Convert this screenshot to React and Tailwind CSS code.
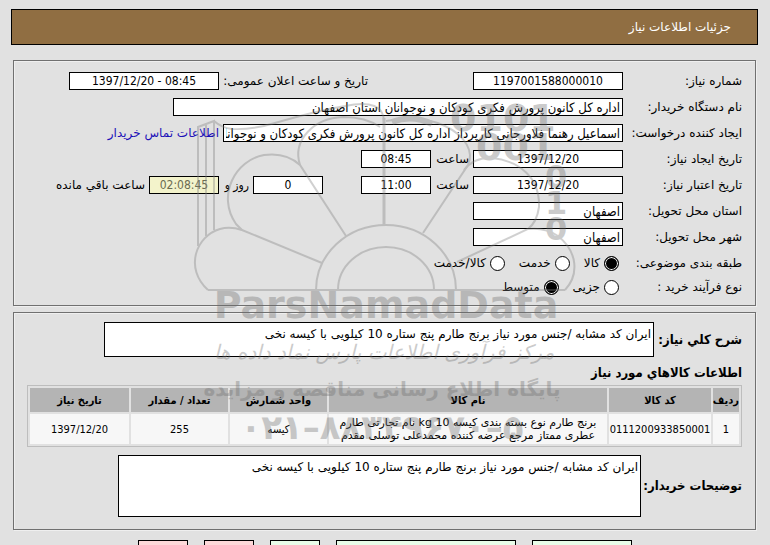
import React from 'react'

const GOODS_COLUMNS = [
  { key: 'row', title: 'ردیف', width: 'w-[26px]' },
  { key: 'code', title: 'کد کالا', width: 'w-[102px]' },
  { key: 'name', title: 'نام کالا', width: 'w-auto' },
  { key: 'unit', title: 'واحد شمارش', width: 'w-[97px]' },
  { key: 'count', title: 'تعداد / مقدار', width: 'w-[97px]' },
  { key: 'date', title: 'تاریخ نیاز', width: 'w-[99px]' },
]

const GOODS = [
  {
    row: '1',
    code: '0111200933850001',
    name: 'برنج طارم نوع بسته بندی کیسه 10 kg نام تجارتی طارم عطری ممتاز مرجع عرضه کننده محمدعلی توسلی مقدم',
    unit: 'کیسه',
    count: '255',
    date: '1397/12/20',
  },
]

const DESCRIPTION = 'ایران کد مشابه /جنس مورد نیاز برنج طارم پنج ستاره 10 کیلویی با کیسه نخی'

const ACTIONS = [
  { id: 'a1', style: 'w-[100px] bg-[#e9fde9]' },
  { id: 'a2', style: 'w-[180px] bg-[#e9fde9]' },
  { id: 'a3', style: 'w-[50px] bg-[#e9fde9]' },
  { id: 'a4', style: 'w-[50px] bg-[#fdd9d9]' },
  { id: 'a5', style: 'w-[50px] bg-[#fdd9d9]' },
]

function Panel({ className, children }) {
  return (
    <section
      className={`border border-[#707070] px-[13px] shadow-[inset_1px_1px_0_#efefef,1px_1px_0_#efefef] ${className}`}
    >
      {children}
    </section>
  )
}

// Short numeric value: number, date or time
function NumberField({ id, className, ...rest }) {
  return (
    <input
      id={id}
      type="text"
      dir="ltr"
      readOnly
      className={`h-[18px] min-w-0 border border-black px-0.5 text-center text-[12px] outline-none ${className}`}
      {...rest}
    />
  )
}

function TextField({ id, className, ...rest }) {
  return (
    <input
      id={id}
      type="text"
      readOnly
      className={`h-[18px] min-w-0 border border-black bg-white px-0.5 text-[13px] text-black outline-none ${className}`}
      {...rest}
    />
  )
}

function Row({ label, htmlFor, children }) {
  return (
    <div className="flex h-[26px] items-center whitespace-nowrap">
      <label htmlFor={htmlFor} className="w-[119px] shrink-0 font-['DejaVu_Sans',sans-serif]">{label}</label>
      {children}
    </div>
  )
}

function RadioRow({ label, name, options, selected, className }) {
  return (
    <div
      role="radiogroup"
      aria-label={label}
      className={`flex items-center whitespace-nowrap font-['DejaVu_Sans',sans-serif] ${className}`}
    >
      <span className="w-[119px] shrink-0">{label}</span>
      {options.map(option => (
        <label key={option} className="me-[10px] ms-1 flex items-center gap-1">
          <input
            type="radio"
            name={name}
            defaultChecked={option === selected}
            className="m-0 h-[15px] w-[15px] shrink-0 appearance-none rounded-full border border-black bg-white checked:bg-black checked:shadow-[inset_0_0_0_1px_white]"
          />
          {option}
        </label>
      ))}
    </div>
  )
}

function Watermark() {
  return (
    <svg
      aria-hidden="true"
      viewBox="190 95 390 360"
      className="pointer-events-none absolute top-[95px] left-[190px] h-[360px] w-[390px] opacity-35"
      fill="none"
      stroke="#7c7c7c"
      strokeWidth="2"
    >
      {/* tower */}
      <path d="M198 246V127L214 121V230M206 236V124M214 121Q222 128 232 129Q252 130 275 123Q320 110 345 106Q384 98 384 122" />
      <path d="M384 118V225" strokeWidth="3" />
      {/* petals */}
      <path d="M322 263L242 230Q230 226 220 229C196 236 184 268 208 290" />
      <path d="M346 236L300 165Q286 152 264 155C236 160 216 195 236 224L242 230" />
      <path d="M300 165C292 140 314 118 343 117Q366 117 380 127" />
      <path d="M386 121Q420 114 445 126C466 136 474 152 468 165L423 233" />
      <path d="M464 170Q474 157 492 158C520 161 540 178 539 207Q537 222 528 229L457 262" />
      <path d="M528 229Q545 227 558 236C578 252 579 275 565 290" />
      <path d="M392 122Q412 114 432 124" strokeWidth="6" />
      {/* hub */}
      <path d="M208 290H565" />
      <path d="M316 290A70 65 0 0 1 456 290M338 290A48 43 0 0 1 434 290" />

      <g fill="#6c6c6c" stroke="none">
        <g fontFamily="DejaVu Sans, sans-serif" fontWeight="700" direction="ltr">
          <text x="450" y="131" fontSize="38">0101</text>
          <text x="476" y="160" fontSize="38">001</text>
          <text x="545" y="188" fontSize="32">0</text>
          <text x="545" y="214" fontSize="32">1</text>
          <text x="545" y="240" fontSize="32">0</text>
        </g>
        <text x="386" y="318" textAnchor="middle" direction="ltr" fontFamily="DejaVu Sans, sans-serif" fontWeight="700" fontSize="38">
          ParsNamadData
        </text>
        <g direction="rtl" textAnchor="middle">
          <text x="384" y="359" fontFamily="DejaVu Sans, sans-serif" fontStyle="italic" fontSize="20">
            مرکز فرآوری اطلاعات پارس نماد داده ها
          </text>
          <text x="382" y="396" fontFamily="DejaVu Sans, sans-serif" fontWeight="700" fontSize="20">
            پایگاه اطلاع رسانی مناقصه و مزایده
          </text>
        </g>
        <text x="382" y="439" textAnchor="middle" direction="ltr" fontFamily="DejaVu Sans, sans-serif" fontWeight="700" fontSize="34">
          ۰۲۱–۸۸۳۴۹۶۷۰–۵
        </text>
      </g>
    </svg>
  )
}

export default function App() {
  return (
    <div
      dir="rtl"
      lang="fa"
      className="relative h-screen overflow-hidden bg-[#e1e1e1] ps-3 pe-[11px] pt-[9px] font-['DejaVu_Sans_Condensed','DejaVu_Sans',sans-serif] text-[12px] leading-4 text-black"
    >
      <header className="flex h-9 items-center border border-black bg-[#906e42] px-[26px] font-['DejaVu_Sans',sans-serif] text-white">
        <h1>جزئیات اطلاعات نیاز</h1>
      </header>

      <main className="mx-0.5 mt-[15px]">
        <Panel className="pt-[7px] pb-[7px]">
          <Row label="شماره نیاز:" htmlFor="number">
            <NumberField id="number" className="w-[150px] bg-white" defaultValue="1197001588000010" />
            <label htmlFor="announced" className="ms-[105px] w-[149px] font-['DejaVu_Sans',sans-serif]">
              تاریخ و ساعت اعلان عمومی:
            </label>
            <NumberField id="announced" className="w-[150px] bg-white" defaultValue="1397/12/20 - 08:45" />
          </Row>
          <Row label="نام دستگاه خریدار:" htmlFor="buyer">
            <TextField id="buyer" className="w-[450px]" defaultValue="اداره کل کانون پرورش فکری کودکان و نوجوانان استان اصفهان" />
          </Row>
          <Row label="ایجاد کننده درخواست:" htmlFor="creator">
            <TextField id="creator" className="w-[400px]" defaultValue="اسماعیل رهنما فلاورجانی کارپرداز اداره کل کانون پرورش فکری کودکان و نوجوانان استان اصفهان" />
            <a href="#contact" className="ms-1 font-['DejaVu_Sans',sans-serif] text-[#1c10b8]">اطلاعات تماس خریدار</a>
          </Row>
          <Row label="تاریخ ایجاد نیاز:" htmlFor="created">
            <NumberField id="created" className="w-[150px] bg-white" defaultValue="1397/12/20" />
            <label htmlFor="createdTime" className="w-[42px] px-1 font-['DejaVu_Sans',sans-serif]">ساعت</label>
            <NumberField id="createdTime" className="w-[70px] bg-white" defaultValue="08:45" />
          </Row>
          <Row label="تاریخ اعتبار نیاز:" htmlFor="valid">
            <NumberField id="valid" className="w-[150px] bg-white" defaultValue="1397/12/20" />
            <label htmlFor="validTime" className="w-[42px] px-1 font-['DejaVu_Sans',sans-serif]">ساعت</label>
            <NumberField id="validTime" className="w-[70px] bg-white" defaultValue="11:00" />
            <NumberField id="days" className="mr-[38px] w-[70px] bg-white" defaultValue="0" />
            <label htmlFor="days" className="w-[34px] px-1">روز و</label>
            <NumberField id="remaining" className="w-[70px] bg-[#f3f3cb] text-[#6b6b50]" defaultValue="02:08:45" />
            <label htmlFor="remaining" className="ms-1 font-['DejaVu_Sans',sans-serif]">ساعت باقي مانده</label>
          </Row>
          <Row label="استان محل تحویل:" htmlFor="province">
            <TextField id="province" className="w-[150px]" defaultValue="اصفهان" />
          </Row>
          <Row label="شهر محل تحویل:" htmlFor="city">
            <TextField id="city" className="w-[150px]" defaultValue="اصفهان" />
          </Row>
          <RadioRow
            label="طبقه بندی موضوعی:"
            name="category"
            options={['کالا', 'خدمت', 'کالا/خدمت']}
            selected="کالا"
            className="h-[26px]"
          />
          <RadioRow
            label="نوع فرآیند خرید :"
            name="process"
            options={['جزیی', 'متوسط']}
            selected="متوسط"
            className="h-[22px]"
          />
        </Panel>

        <Panel className="mt-[6px] pt-[9px] pb-3">
          <div className="flex items-center whitespace-nowrap">
            <label htmlFor="summary" className="w-[88px] shrink-0 text-[13px] font-bold">شرح کلي نیاز:</label>
            <textarea
              id="summary"
              readOnly
              defaultValue={DESCRIPTION}
              className="h-[35px] w-[550px] min-w-0 resize-none overflow-hidden border border-black bg-white px-0.5 py-[3px] font-['DejaVu_Sans',sans-serif] whitespace-pre-wrap outline-none"
            />
          </div>
          <h2 className="mt-2 text-[13px] font-bold">اطلاعات کالاهاي مورد نیاز</h2>
          <table className="mt-1 w-full table-fixed border-separate border-spacing-0.5 border border-[#bdbdbd] text-center text-[11px] leading-[13px]">
            <thead>
              <tr>
                {GOODS_COLUMNS.map(col => (
                  <th key={col.key} className={`h-6 bg-[#b4b4b4] p-0 font-bold ${col.width}`}>{col.title}</th>
                ))}
              </tr>
            </thead>
            <tbody>
              {GOODS.map(item => (
                <tr key={item.row}>
                  {GOODS_COLUMNS.map(col => (
                    <td
                      key={col.key}
                      className={`h-[30px] bg-[#f7f7f7] py-0 ${col.key === 'name' ? "px-2 font-['DejaVu_Sans',sans-serif]" : 'px-0'}`}
                    >
                      {item[col.key]}
                    </td>
                  ))}
                </tr>
              ))}
            </tbody>
          </table>
          <div className="mt-2 flex items-center whitespace-nowrap">
            <label htmlFor="notes" className="w-[101px] shrink-0 text-[13px] font-bold">توضیحات خریدار:</label>
            <textarea
              id="notes"
              readOnly
              defaultValue={DESCRIPTION}
              className="h-[62px] w-[523px] min-w-0 resize-none overflow-hidden border border-black bg-white px-0.5 py-[3px] font-['DejaVu_Sans',sans-serif] whitespace-pre-wrap outline-none"
            />
          </div>
        </Panel>

        <div className="mt-[10px] flex justify-center gap-4">
          {ACTIONS.map(action => (
            <button key={action.id} type="button" className={`h-6 border border-black ${action.style}`} />
          ))}
        </div>
      </main>

      <Watermark />
    </div>
  )
}
